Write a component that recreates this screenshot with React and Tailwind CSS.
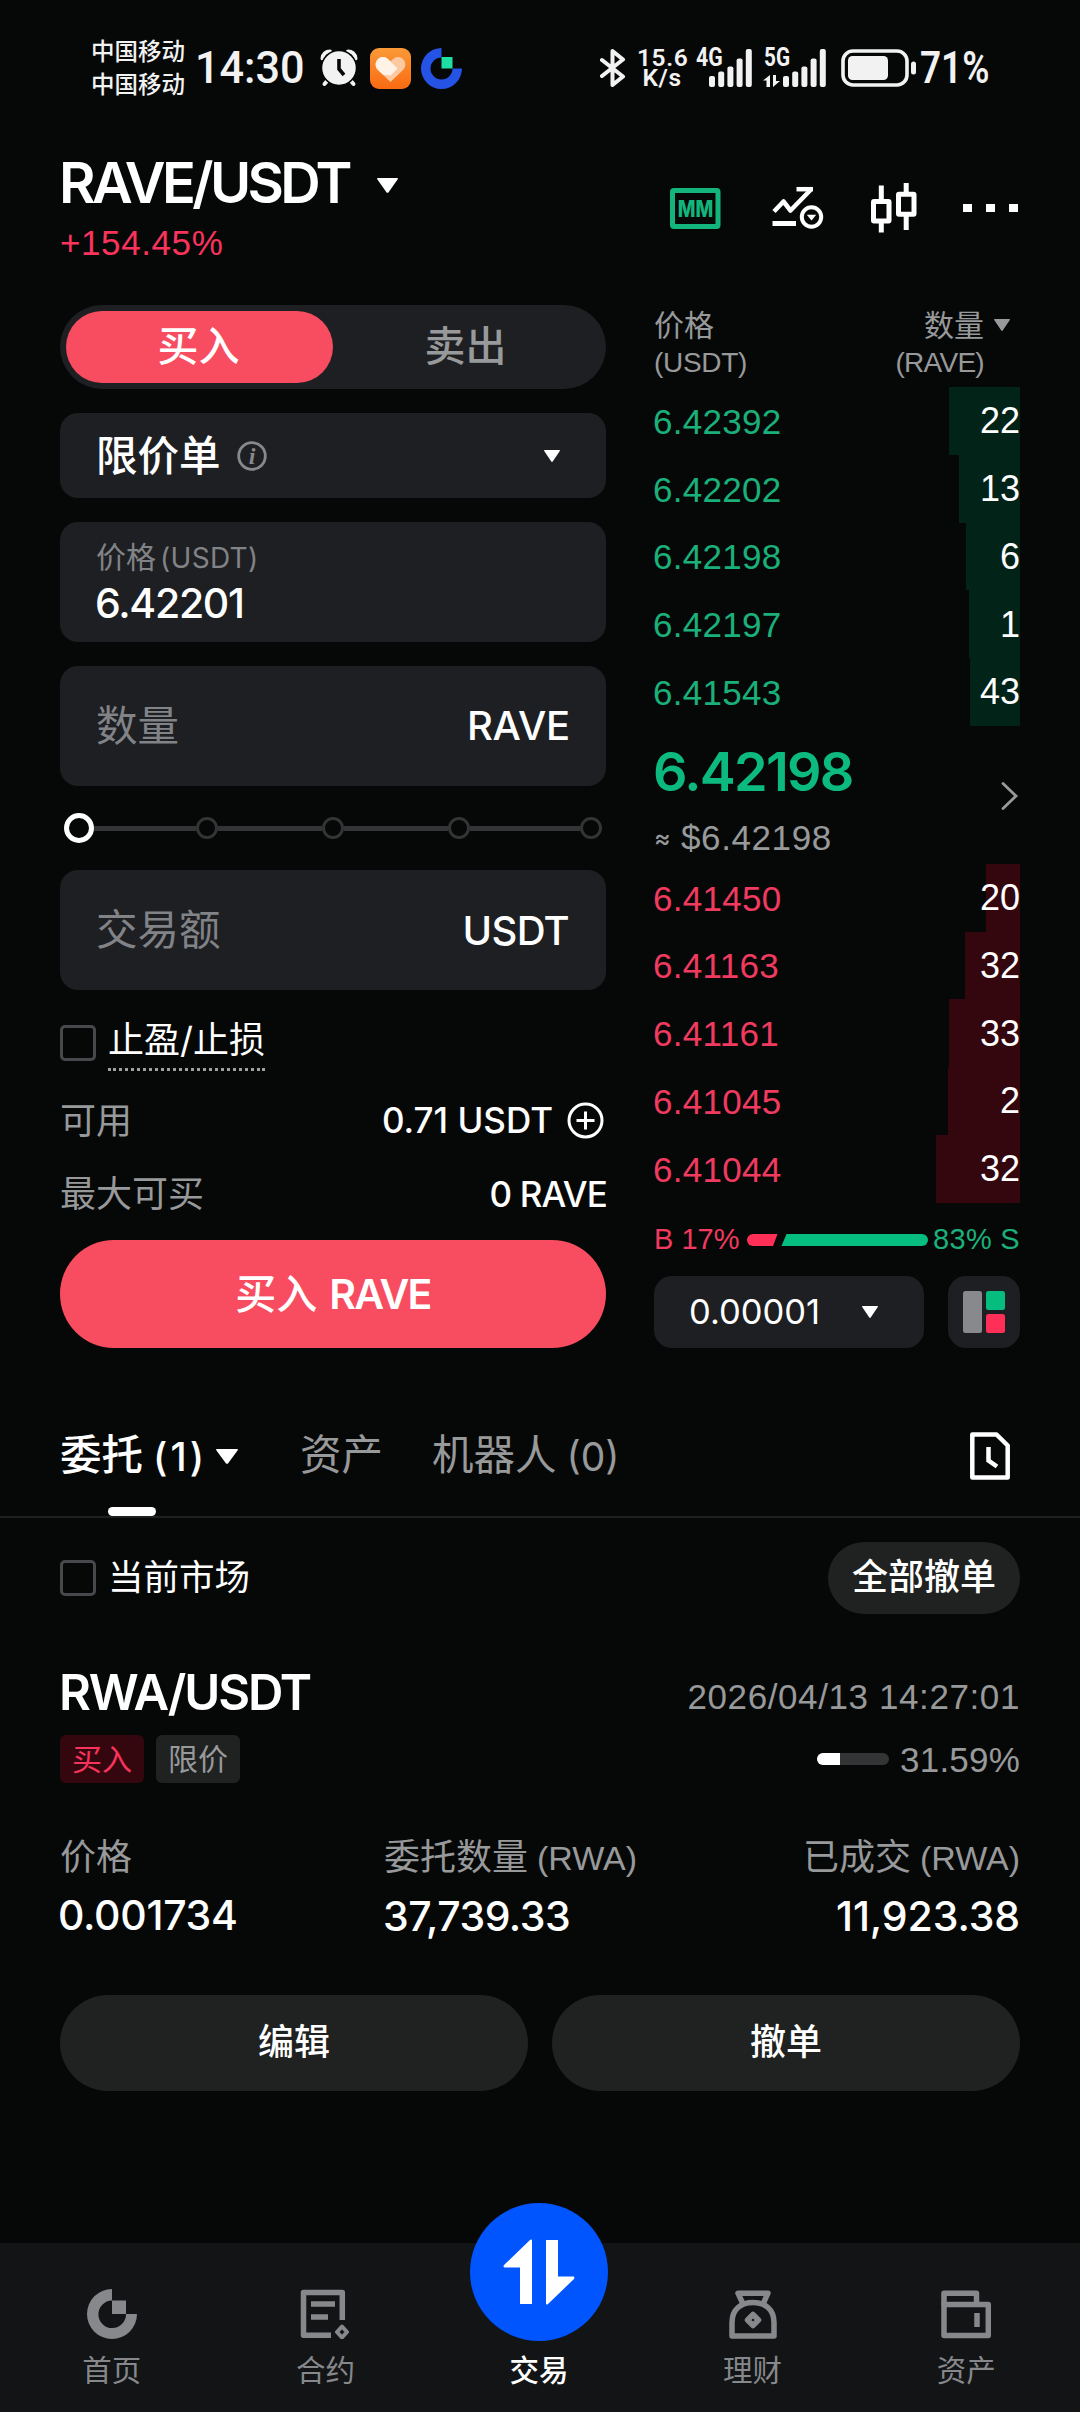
import React, { useState } from 'react';
import clsx from 'clsx';

const bids = [
  { price: '6.42392', amount: '22', depth: 71 },
  { price: '6.42202', amount: '13', depth: 61 },
  { price: '6.42198', amount: '6', depth: 54 },
  { price: '6.42197', amount: '1', depth: 51 },
  { price: '6.41543', amount: '43', depth: 50 },
];

const asks = [
  { price: '6.41450', amount: '20', depth: 34 },
  { price: '6.41163', amount: '32', depth: 55 },
  { price: '6.41161', amount: '33', depth: 71 },
  { price: '6.41045', amount: '2', depth: 72 },
  { price: '6.41044', amount: '32', depth: 84 },
];

function Caret({ className }) {
  return (
    <svg viewBox="0 0 16 12" preserveAspectRatio="none" className={clsx('shrink-0', className)} fill="currentColor">
      <path d="M0.6 0h14.8c.5 0 .8.6.4 1L8.7 11.5c-.3.5-1.1.5-1.4 0L.2 1C-.1.6.1 0 .6 0Z" />
    </svg>
  );
}

/* ---------- status bar ---------- */

function SignalBars({ className }) {
  return (
    <svg width="44" height="38" viewBox="0 0 44 38" fill="currentColor" className={className}>
      <rect x="0" y="27" width="6" height="11" rx="2" />
      <rect x="9.2" y="22.5" width="6" height="15.5" rx="2" />
      <rect x="18.4" y="17.5" width="6" height="20.5" rx="2" />
      <rect x="27.6" y="9.5" width="6" height="28.5" rx="2" />
      <rect x="36.8" y="0" width="6" height="38" rx="2" />
    </svg>
  );
}

function StatusBar() {
  return (
    <div className="flex h-[136px] shrink-0 items-center pl-[91px] text-[#f2f2f2]">
      <div className="w-[96px] text-[23.5px] leading-[33px] font-medium">
        <div>中国移动</div>
        <div>中国移动</div>
      </div>
      <div className="ml-[8px] w-[117px] origin-left scale-x-[0.96] font-['Roboto'] text-[45px] leading-[60px] font-medium whitespace-nowrap">14:30</div>

      {/* alarm */}
      <svg width="38" height="38" viewBox="0 0 38 38" className="ml-[8px]">
        <g fill="none" stroke="#f2f2f2" strokeWidth="4" strokeLinecap="round">
          <path d="M2.5 9.5C3 5 6 2.5 10 2.5M35.5 9.5C35 5 32 2.5 28 2.5" />
          <path d="M7.5 31.5 4.5 35M30.5 31.5l3 3.5" />
        </g>
        <circle cx="19" cy="19" r="17.5" fill="#f2f2f2" stroke="#060807" strokeWidth="1.5" />
        <path d="M19 10v10l5 6" fill="none" stroke="#060807" strokeWidth="3.6" />
      </svg>

      {/* health */}
      <svg width="41" height="41" viewBox="0 0 41 41" className="ml-[12px]">
        <defs>
          <linearGradient id="health" x1="0" y1="0" x2="0" y2="1">
            <stop offset="0" stopColor="#fb9a38" />
            <stop offset="1" stopColor="#f96a12" />
          </linearGradient>
        </defs>
        <rect width="41" height="41" rx="9" fill="url(#health)" />
        <path d="M20.5 34 8 22C1 14.5 11 4 18.5 11.5L20.5 13.5 22.5 11.5C30 4 40 14.5 33 22Z" fill="#fcc9a0" />
        <path d="M20.5 13.5 27.5 20.5 20.5 27.5 13 26.8 8 22C1 14.5 11 4 18.5 11.5Z" fill="#fff3e8" />
      </svg>

      <svg width="41" height="41" viewBox="0 0 41 41" className="ml-[10px]">
        <path d="M20.5 0A20.5 20.5 0 1 0 41 20.5H31.5A11 11 0 1 1 20.5 9.5Z" fill="#2453e6" />
        <path d="M20.5 9h11v11.5h-11z" fill="#1fe0a4" />
      </svg>

      {/* bluetooth */}
      <svg width="26" height="38" viewBox="0 0 26 38" className="ml-[138px]" fill="none" stroke="#f2f2f2" strokeWidth="4" strokeLinejoin="round" strokeLinecap="round">
        <path d="M2 11 23 27.5 12.5 36V2L23 10.5 2 27" />
      </svg>

      <div className="ml-[11px] w-[50px] text-center font-['Roboto'] text-[24.5px] leading-[20px] font-semibold tracking-[0.6px]">
        15.6
        <br />
        K/s
      </div>

      <div className="relative ml-[22px] h-[38px] w-[44px]">
        <span className="absolute -top-[3px] -left-[13px] origin-left scale-x-[0.85] font-['Roboto'] text-[25px] leading-[24px] font-bold">4G</span>
        <SignalBars />
      </div>
      <div className="relative ml-[30px] h-[38px] w-[44px]">
        <span className="absolute -top-[3px] -left-[19px] origin-left scale-x-[0.83] font-['Roboto'] text-[25px] leading-[24px] font-bold">5G</span>
        <svg width="17" height="12" viewBox="0 0 17 12" className="absolute bottom-0 -left-[20px]" fill="#f2f2f2">
          <path d="M7 0v12H3.5V5.5H0ZM10 0h3v6h4l-7 6Z" />
        </svg>
        <SignalBars />
      </div>

      {/* battery */}
      <svg width="76" height="38" viewBox="0 0 76 38" className="ml-[14px]">
        <rect x="2" y="2" width="64" height="34" rx="10" fill="none" stroke="#f2f2f2" strokeWidth="3.6" />
        <rect x="7" y="7" width="40" height="24" rx="4.5" fill="#f2f2f2" />
        <rect x="70" y="12.5" width="5" height="13" rx="2.5" fill="#f2f2f2" />
      </svg>
      <div className="ml-[3px] origin-left scale-x-[0.83] font-['Roboto'] text-[44.5px] leading-[60px] font-semibold">71%</div>
    </div>
  );
}

/* ---------- header ---------- */

function Header() {
  return (
    <div className="flex h-[169px] shrink-0 items-start justify-between pr-[62px] pl-[60px]">
      <div className="pt-[19px]">
        <div className="flex items-center">
          <h1 className="-ml-[1px] w-[318px] text-[56px] leading-[56px] font-semibold tracking-[-3.6px] whitespace-nowrap">RAVE/USDT</h1>
          <Caret className="mt-1 h-[15px] w-[21px]" />
        </div>
        <div className="mt-[13px] font-['Liberation_Sans'] text-[35px] leading-[37px] tracking-[0.6px] text-[#f8335c]">+154.45%</div>
      </div>

      <div className="mt-[47px] flex items-center">
        <svg width="51" height="50" viewBox="0 0 51 50">
          <rect x="2.5" y="7.5" width="45.5" height="36" rx="1.5" fill="none" stroke="#12b57c" strokeWidth="5" />
          <text x="7.8" y="34" textLength="35.5" lengthAdjust="spacingAndGlyphs" fontFamily="Inter" fontWeight="800" fontSize="23" fill="#12b57c">MM</text>
        </svg>
        <svg width="52" height="50" viewBox="0 0 52 50" className="ml-[51px]" fill="none" stroke="#fff" strokeWidth="4.5">
          <path d="M2 28.5 11.5 18.5 18.5 27.5 38.5 7" strokeLinejoin="round" />
          <path d="M24.5 6.2H41" />
          <path d="M0.5 40.5H24" strokeWidth="5" />
          <circle cx="39.5" cy="34" r="9.7" strokeWidth="4" />
          <path d="M34.8 31.8h9.4L39.5 37.5Z" fill="#fff" stroke="none" />
        </svg>
        <svg width="46" height="50" viewBox="0 0 46 50" className="ml-[47px]" fill="none" stroke="#fff" strokeWidth="5">
          <rect x="2.5" y="18.5" width="15.5" height="19.5" rx="0.5" />
          <path d="M10.3 2.5V17M10.3 40v9.5" />
          <rect x="27.5" y="11.2" width="15.5" height="20" rx="0.5" />
          <path d="M35.2 0v10M35.2 33v14" />
        </svg>
        <div className="ml-[46px] flex gap-[14px]">
          <span className="h-2 w-[9px] bg-white" />
          <span className="h-2 w-[9px] bg-white" />
          <span className="h-2 w-[9px] bg-white" />
        </div>
      </div>
    </div>
  );
}

/* ---------- order form ---------- */

function Checkbox() {
  return <span className="size-[36px] shrink-0 rounded-[5px] border-[3px] border-[#47484b]" />;
}

function Slider() {
  return (
    <div className="flex h-[84px] items-center px-1">
      <span className="size-[30px] shrink-0 rounded-full border-[5px] border-white" />
      <span className="h-[5px] w-[102px] bg-[#333436]" />
      <span className="size-[22px] shrink-0 rounded-full border-[3.5px] border-[#333436]" />
      <span className="h-[5px] w-[104px] bg-[#333436]" />
      <span className="size-[22px] shrink-0 rounded-full border-[3.5px] border-[#333436]" />
      <span className="h-[5px] w-[104px] bg-[#333436]" />
      <span className="size-[22px] shrink-0 rounded-full border-[3.5px] border-[#333436]" />
      <span className="h-[5px] w-[110px] bg-[#333436]" />
      <span className="size-[22px] shrink-0 rounded-full border-[3.5px] border-[#333436]" />
    </div>
  );
}

function OrderForm() {
  const [side, setSide] = useState('buy');

  return (
    <div className="w-[546px] shrink-0">
      <div className="flex h-[84px] rounded-full bg-[#1e1f22] p-[6px] text-[41px] font-medium">
        <button
          onClick={() => setSide('buy')}
          className={clsx('flex-1 rounded-full pr-[2px] pb-[2px] leading-none', side === 'buy' ? 'bg-[#f84d60] text-white' : 'text-[#98999b]')}
        >
          买入
        </button>
        <button
          onClick={() => setSide('sell')}
          className={clsx('flex-1 rounded-full pr-[2px] pb-[2px] leading-none', side === 'sell' ? 'bg-[#f84d60] text-white' : 'text-[#98999b]')}
        >
          卖出
        </button>
      </div>

      <div className="mt-6 flex h-[85px] items-center rounded-[18px] bg-[#1e1f22] pr-[46px] pl-[36px]">
        <span className="pt-[2px] text-[41.5px] leading-none font-medium">限价单</span>
        <svg width="30" height="30" viewBox="0 0 30 30" className="ml-[16px]">
          <circle cx="15" cy="15" r="13.3" fill="none" stroke="#88898c" strokeWidth="2.8" />
          <text x="15" y="22.5" textAnchor="middle" fontFamily="Liberation Serif" fontStyle="italic" fontWeight="bold" fontSize="24" fill="#88898c">i</text>
        </svg>
        <Caret className="ml-auto h-[12px] w-[16px]" />
      </div>

      <div className="mt-6 h-[120px] rounded-[18px] bg-[#1e1f22] px-[36px] pt-[17px]">
        <div className="text-[30px] leading-[36px] text-[#818387]">
          价格<span className="ml-[4px] text-[28px] tracking-[0.3px]">(USDT)</span>
        </div>
        <div className="-ml-[1px] mt-[2px] text-[41px] leading-[50px] font-medium tracking-[-1.3px]">6.42201</div>
      </div>

      <div className="mt-6 flex h-[120px] items-center justify-between rounded-[18px] bg-[#1e1f22] px-[36px]">
        <span className="pt-[2px] text-[41.5px] leading-none text-[#818387]">数量</span>
        <span className="text-[40px] leading-none font-medium tracking-[-0.2px]">RAVE</span>
      </div>

      <Slider />

      <div className="flex h-[120px] items-center justify-between rounded-[18px] bg-[#1e1f22] px-[36px]">
        <span className="pt-[2px] text-[41.5px] leading-none text-[#818387]">交易额</span>
        <span className="mr-[1px] pt-[2px] text-[40px] leading-none font-medium tracking-[-0.7px]">USDT</span>
      </div>

      <div className="mt-[35px] flex h-[46px] items-start">
        <Checkbox />
        <span className="-mt-[4px] ml-3 border-b-[3px] border-dotted border-[#a0a1a3] pb-[9px] text-[36px] leading-[38px]">止盈/止损</span>
      </div>

      <div className="mt-[29px] flex h-[40px] items-center text-[36px] leading-none">
        <span className="pt-[2px] text-[#98999b]">可用</span>
        <span className="ml-auto text-[35px] font-medium">0.71 USDT</span>
        <svg width="37" height="37" viewBox="0 0 37 37" className="mr-[2px] ml-[14px]" fill="none" stroke="#fff" strokeWidth="3">
          <circle cx="18.5" cy="18.5" r="16.5" />
          <path d="M18.5 9.5v18M9.5 18.5h18" />
        </svg>
      </div>

      <div className="mt-[34px] flex h-[40px] items-center justify-between text-[36px] leading-none">
        <span className="text-[#98999b]">最大可买</span>
        <span className="-mr-px text-[35px] font-medium tracking-[-0.9px]">0 RAVE</span>
      </div>

      <button className="mt-[26px] h-[108px] w-full rounded-full bg-[#f84d60] text-[41px] leading-none">
        <span className="font-medium">买入</span>
        <span className="ml-[12px] font-semibold tracking-[-1.7px]">RAVE</span>
      </button>
    </div>
  );
}

/* ---------- order book ---------- */

function BookRow({ row, type }) {
  return (
    <div className="relative flex h-[67.75px] items-center justify-between pt-px font-['Liberation_Sans'] text-[35px] leading-none">
      <span
        className={clsx('absolute inset-y-0 right-0', type === 'bid' ? 'bg-[#022318]' : 'bg-[#34070f]')}
        style={{ width: row.depth }}
      />
      <span className={clsx('-ml-px tracking-[0.3px]', type === 'bid' ? 'text-[#1bb07a]' : 'text-[#f03a5f]')}>{row.price}</span>
      <span className="relative text-[36px] text-white">{row.amount}</span>
    </div>
  );
}

function OrderBook() {
  return (
    <div className="w-[366px] shrink-0">
      <div className="flex h-[82px] justify-between text-[#98999b]">
        <div>
          <div className="text-[30px] leading-[40px]">价格</div>
          <div className="font-['Liberation_Sans'] text-[28px] leading-[36px] tracking-[-0.3px]">(USDT)</div>
        </div>
        <div className="mr-[10px] flex">
          <div className="text-right">
            <div className="text-[30px] leading-[40px]">数量</div>
            <div className="font-['Liberation_Sans'] text-[28px] leading-[36px] tracking-[-0.7px]">(RAVE)</div>
          </div>
          <Caret className="mt-[14px] ml-[10px] h-[12px] w-[16px]" />
        </div>
      </div>

      {bids.map((row) => (
        <BookRow key={row.price} row={row} type="bid" />
      ))}

      <div className="flex h-[138px] items-start justify-between">
        <div className="pt-[18px]">
          <div className="-ml-px text-[54px] leading-[56px] font-semibold tracking-[-1.7px] text-[#0cb97e]">6.42198</div>
          <div className="mt-[18px] flex items-center text-[#98999b]">
            <span className="w-[27px] text-[25px] leading-[40px] font-medium">≈</span>
            <span className="font-['Liberation_Sans'] text-[35px] leading-[40px] tracking-[0.6px]">$6.42198</span>
          </div>
        </div>
        <svg width="18" height="30" viewBox="0 0 18 30" className="mt-[55px] mr-[1px]" fill="none" stroke="#98999b" strokeWidth="2.8" strokeLinecap="round">
          <path d="M2 2.5 15 15 2 27.5" />
        </svg>
      </div>

      {asks.map((row) => (
        <BookRow key={row.price} row={row} type="ask" />
      ))}

      {/* buy / sell ratio */}
      <div className="mt-[22px] flex h-[30px] items-center font-['Liberation_Sans'] text-[29px] leading-none">
        <span className="w-[93px] text-[#f03a5f]">B 17%</span>
        <svg width="181" height="12" viewBox="0 0 181 12">
          <path d="M6 0H30.5L26 12H6A6 6 0 0 1 6 0Z" fill="#ff2f57" />
          <path d="M39.5 0H175a6 6 0 0 1 0 12H34.5Z" fill="#06bd80" />
        </svg>
        <span className="ml-auto tracking-[0.3px] text-[#1bb07a]">83% S</span>
      </div>

      <div className="mt-[21px] flex justify-between">
        <div className="flex h-[72px] w-[270px] items-center justify-between rounded-[18px] bg-[#1e1f22] pr-[46px] pl-[35px]">
          <span className="pt-px text-[34.5px] leading-none">0.00001</span>
          <Caret className="h-[12px] w-[16px]" />
        </div>
        <div className="flex size-[72px] items-center justify-center rounded-[18px] bg-[#1e1f22]">
          <svg width="42" height="42" viewBox="0 0 42 42">
            <rect width="19" height="42" rx="2.5" fill="#87898d" />
            <rect x="23" width="19" height="19" rx="2.5" fill="#06bd80" />
            <rect x="23" y="23" width="19" height="19" rx="2.5" fill="#ff2f57" />
          </svg>
        </div>
      </div>
    </div>
  );
}

/* ---------- open orders ---------- */

function OrderTabs() {
  return (
    <div className="flex h-[170px] shrink-0 items-stretch border-b-2 border-[#1e2020] px-[60px] pt-[48px] text-[41.5px] leading-none text-[#98999b]">
      <div className="relative flex w-[240px] items-center text-white">
        <span className="font-medium">委托</span>
        <span className="ml-[10px] text-[39px] font-medium tracking-[3px]">(1)</span>
        <Caret className="ml-[9px] h-[15px] w-[22px]" />
        <span className="absolute bottom-0 left-[48px] h-[9px] w-[48px] rounded-full bg-white" />
      </div>
      <div className="flex w-[132px] items-center">资产</div>
      <div className="flex items-center">
        机器人<span className="ml-[10px] text-[39px]">(0)</span>
      </div>
      <div className="mr-[10px] ml-auto flex items-center">
        <svg width="40" height="48" viewBox="0 0 40 48" fill="none" stroke="#fff" strokeWidth="4.5">
          <path d="M2.3 2.5H26.5L37.7 13.5V45.5H2.3Z" strokeLinejoin="round" />
          <path d="M18.5 15v13.5l8.5 6" />
        </svg>
      </div>
    </div>
  );
}

function OpenOrder() {
  return (
    <div className="px-[60px]">
      <div className="mt-6 flex h-[72px] items-center justify-between text-[36px] leading-none">
        <div className="flex items-center gap-[12px]">
          <Checkbox />
          <span className="pb-px text-[35.5px]">当前市场</span>
        </div>
        <button className="h-full w-[192px] rounded-full bg-[#202221] pb-[2px] font-medium whitespace-nowrap">全部撤单</button>
      </div>

      <div className="mt-[48px] flex h-[60px] items-center justify-between">
        <span className="-ml-px text-[49px] leading-none font-semibold tracking-[-2.1px]">RWA/USDT</span>
        <span className="mt-[8px] font-['Liberation_Sans'] text-[35px] leading-none tracking-[0.6px] text-[#98999b]">2026/04/13 14:27:01</span>
      </div>

      <div className="mt-[13px] flex h-[48px] items-center text-[30px] leading-none">
        <span className="flex h-full w-[84px] items-center justify-center rounded-[6px] bg-[#34070f] text-[#f8335c]">买入</span>
        <span className="ml-3 flex h-full w-[84px] items-center justify-center rounded-[6px] bg-[#202221] text-[#98999b]">限价</span>
        <div className="ml-auto h-3 w-[72px] overflow-hidden rounded-full bg-[#333436]">
          <div className="h-full w-[23px] bg-white" />
        </div>
        <span className="ml-[11px] font-['Liberation_Sans'] text-[35px] tracking-[0.2px] text-[#98999b]">31.59%</span>
      </div>

      <div className="mt-[52px] flex">
        <div className="w-[324px]">
          <div className="text-[36px] leading-[44px] text-[#98999b]">价格</div>
          <div className="-ml-[2px] mt-[11px] text-[41px] leading-[50px] font-medium tracking-[-0.3px]">0.001734</div>
        </div>
        <div>
          <div className="text-[36px] leading-[44px] text-[#98999b]">
            委托数量<span className="ml-[9px] font-['Liberation_Sans'] text-[34px]">(RWA)</span>
          </div>
          <div className="-ml-px mt-[11px] text-[41px] leading-[50px] font-medium tracking-[-0.5px]">37,739.33</div>
        </div>
        <div className="ml-auto text-right">
          <div className="text-[36px] leading-[44px] text-[#98999b]">
            已成交<span className="ml-[9px] font-['Liberation_Sans'] text-[34px]">(RWA)</span>
          </div>
          <div className="mt-[11px] text-[41px] leading-[50px] font-medium tracking-[-0.1px]">11,923.38</div>
        </div>
      </div>

      <div className="mt-[54px] grid grid-cols-2 gap-6">
        <button className="h-[96px] rounded-full bg-[#202221] pb-[2px] text-[36px] leading-none font-medium">编辑</button>
        <button className="h-[96px] rounded-full bg-[#202221] pb-[2px] text-[36px] leading-none font-medium">撤单</button>
      </div>
    </div>
  );
}

/* ---------- bottom navigation ---------- */

function NavItem({ label, children }) {
  return (
    <div className="flex flex-1 flex-col items-center text-[#86888b]">
      <svg width="50" height="50" viewBox="0 0 50 50" fill="none" stroke="currentColor" strokeWidth="5.5">
        {children}
      </svg>
      <span className="mt-[11px] text-[29.5px] leading-[40px]">{label}</span>
    </div>
  );
}

function BottomNav() {
  return (
    <nav className="mt-auto flex h-[169px] shrink-0 bg-[#131416] pt-[46px] pr-[7px] pl-[5px]">
      <NavItem label="首页">
        <path d="M25 0A25 25 0 1 0 50 25H39A13.8 13.8 0 1 1 25 11.5Z" fill="currentColor" stroke="none" />
        <path d="M25 11.5h14V25H25z" fill="currentColor" stroke="none" />
      </NavItem>
      <NavItem label="合约">
        <path d="M31 46.3H3.5V3.5H42.3V31" strokeLinejoin="round" />
        <path d="M11 15h24M11 28h17" />
        <path d="M42 37.5 47 43 42 48.5 37 43Z" strokeWidth="4" strokeLinejoin="round" />
      </NavItem>

      <div className="relative flex flex-1 flex-col items-center">
        <div className="absolute -top-[86px] flex size-[138px] items-center justify-center rounded-full bg-[#0155ff]">
          <svg width="72" height="66" viewBox="0 0 72 66" fill="#fff">
            <path d="M29 1.5V65H17V28.5H1.8C.6 28.5.2 27 1 26L27 1C28 0 29 .5 29 1.5Z" />
            <path d="M43 1H55V37.5H70.2C71.4 37.5 71.8 39 71 40L45 65C44 66 43 65.5 43 64.5Z" />
          </svg>
        </div>
        <span className="mt-[61px] text-[29.5px] leading-[40px] font-medium text-white">交易</span>
      </div>

      <NavItem label="理财">
        <path d="M4 47V33.5C4 20 13 13.5 25 13.5S46 20 46 33.5V47Z" strokeLinejoin="round" />
        <path d="M15 15 10 4.2H40L35 15" strokeLinejoin="round" />
        <path d="M25 25.5 30.5 31 25 36.5 19.5 31Z" strokeLinejoin="round" />
      </NavItem>
      <NavItem label="资产">
        <path d="M3 15.5H47.3V46.5H3Z" strokeLinejoin="round" />
        <path d="M3 16V4.2H35.5V15" strokeLinejoin="round" />
        <path d="M36 24v14" />
      </NavItem>
    </nav>
  );
}

export default function App() {
  return (
    <div className="flex h-[2412px] w-[1080px] flex-col overflow-hidden bg-[#060807] font-['Inter','Noto_Sans_CJK_SC',sans-serif] text-white">
      <StatusBar />
      <Header />
      <div className="flex h-[1043px] shrink-0 justify-between px-[60px]">
        <OrderForm />
        <OrderBook />
      </div>
      <OrderTabs />
      <OpenOrder />
      <BottomNav />
    </div>
  );
}
